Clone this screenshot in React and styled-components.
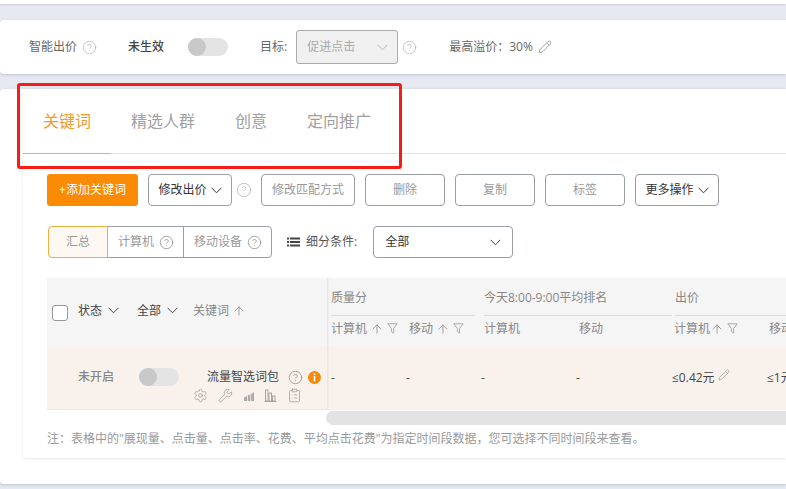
import React from "react";
import styled, { createGlobalStyle } from "styled-components";
import {
  ArrowUp,
  CircleHelp,
  ClipboardList,
  Pencil,
  Settings,
  Wrench,
} from "lucide-react";

const Chevron = ({ color = "currentColor" }) => (
  <svg width="11" height="7" viewBox="0 0 11 7" fill="none" stroke={color} strokeWidth="1" style={{ flex: "none" }}>
    <path d="M0.6 0.8L5.5 5.8L10.4 0.8" />
  </svg>
);

const FunnelIcon = () => (
  <svg width="11" height="11" viewBox="0 0 11 11" fill="none" stroke="#aaa" strokeWidth="1" style={{ flex: "none" }}>
    <path d="M0.8 0.8h9.4L6.6 5.4v4.6L4.4 8.6V5.4z" />
  </svg>
);

const InfoIcon = () => (
  <svg width="13" height="13" viewBox="0 0 13 13">
    <circle cx="6.5" cy="6.5" r="6.5" fill="#f68a06" />
    <rect x="5.7" y="2.4" width="1.6" height="1.7" fill="#fff" />
    <rect x="5.7" y="5" width="1.6" height="5.4" fill="#fff" />
  </svg>
);

const ListIcon = () => (
  <svg width="13" height="10" viewBox="0 0 13 10" fill="#444">
    <rect x="0" y="0.5" width="2" height="2" />
    <rect x="3" y="0.5" width="10" height="2" />
    <rect x="0" y="4" width="2" height="2" />
    <rect x="3" y="4" width="10" height="2" />
    <rect x="0" y="7.5" width="2" height="2" />
    <rect x="3" y="7.5" width="10" height="2" />
  </svg>
);

const AreaChartIcon = () => (
  <svg width="12" height="12" viewBox="0 0 12 12" fill="#aaa">
    <path d="M1 11V7.5l3-1.5v5zM4.8 11V5.6l2.6-1.3V11zM8.2 11V3.9L11 2v9z" />
  </svg>
);

const BarsIcon = () => (
  <svg width="13" height="13" viewBox="0 0 13 13" fill="none" stroke="#a5a5a5" strokeWidth="1">
    <path d="M0.5 12.5h12" />
    <rect x="1.5" y="1" width="2.5" height="11" />
    <rect x="5" y="4" width="2.5" height="8" />
    <rect x="8.5" y="7" width="2.5" height="5" />
  </svg>
);

const App = () => {
  return (
    <Page>
      <GlobalStyle />
      <TopStrip />
      <BidCard>
        <BidLabel>智能出价</BidLabel>
        <Help $size={13} $left={6} />
        <StatusText>未生效</StatusText>
        <Toggle $left={24} />
        <BidLabel $left={32}>目标:</BidLabel>
        <GoalSelect>
          促进点击
          <Chevron color="#bbb" />
        </GoalSelect>
        <Help $size={13} $left={5} />
        <BidLabel $left={33}>{"最高溢价\uFF1A30%"}</BidLabel>
        <Pencil size={14} color="#888" strokeWidth={1.3} style={{ marginLeft: 5 }} />
      </BidCard>

      <MainPanel>
        <InnerCard>
          <Tabs>
            <Tab $active>关键词</Tab>
            <Tab>精选人群</Tab>
            <Tab>创意</Tab>
            <Tab>定向推广</Tab>
          </Tabs>

          <Toolbar>
            <PrimaryButton>+添加关键词</PrimaryButton>
            <Button $width={84} $dark>
              修改出价
              <Chevron />
            </Button>
            <Help $size={14} $left={-5} />
            <Button $width={94}>修改匹配方式</Button>
            <Button $width={80}>删除</Button>
            <Button $width={80}>复制</Button>
            <Button $width={80}>标签</Button>
            <Button $width={84} $dark>
              更多操作
              <Chevron />
            </Button>
          </Toolbar>

          <FilterRow>
            <Segments>
              <Segment $width={60} $active>汇总</Segment>
              <Segment $width={77}>
                计算机
                <Help $size={13} $left={6} $color="#888" />
              </Segment>
              <Segment $width={89}>
                移动设备
                <Help $size={13} $left={6} $color="#888" />
              </Segment>
            </Segments>
            <ConditionLabel>
              <ListIcon />
              细分条件:
            </ConditionLabel>
            <ConditionSelect>
              全部
              <Chevron color="#444" />
            </ConditionSelect>
          </FilterRow>

          <Table>
            <FixedColumn>
              <FixedHead>
                <Checkbox />
                <HeadItem $left={10} $gap={6} $dark>
                  状态
                  <Chevron />
                </HeadItem>
                <HeadItem $left={18} $gap={6} $dark>
                  全部
                  <Chevron />
                </HeadItem>
                <HeadItem $left={15} $gap={3}>
                  关键词
                  <ArrowUp size={14} strokeWidth={1.3} />
                </HeadItem>
              </FixedHead>
              <FixedRow>
                <OffText>未开启</OffText>
                <Toggle $left={25} />
                <NameCell>
                  <NameLine>
                    流量智选词包
                    <Help $size={13} $left={10} $color="#888" />
                    <InfoSlot>
                      <InfoIcon />
                    </InfoSlot>
                  </NameLine>
                  <ActionIcons>
                    <Settings size={15} color="#999" strokeWidth={1.2} />
                    <Wrench size={15} color="#999" strokeWidth={1.2} />
                    <AreaChartIcon />
                    <BarsIcon />
                    <ClipboardList size={15} color="#999" strokeWidth={1.2} />
                  </ActionIcons>
                </NameCell>
              </FixedRow>
            </FixedColumn>

            <DataGrid>
              <GroupHead $span={2} $gap={6}>质量分</GroupHead>
              <GroupHead $span={2} $gap={0} $left={3}>今天8:00-9:00平均排名</GroupHead>
              <GroupHead $span={2} $gap={-30} $left={3}>出价</GroupHead>

              <SubHead>
                计算机
                <ArrowUp size={14} strokeWidth={1.3} />
                <FunnelIcon />
              </SubHead>
              <SubHead $left={3}>
                移动
                <ArrowUp size={14} strokeWidth={1.3} />
                <FunnelIcon />
              </SubHead>
              <SubHead $left={3}>计算机</SubHead>
              <SubHead $left={3}>移动</SubHead>
              <SubHead $left={2}>
                计算机
                <ArrowUp size={14} strokeWidth={1.3} style={{ marginLeft: -3 }} />
                <FunnelIcon />
              </SubHead>
              <SubHead $left={2}>移动</SubHead>

              <Value>-</Value>
              <Value>-</Value>
              <Value>-</Value>
              <Value>-</Value>
              <Value>
                ≤0.42元
                <Pencil size={12} color="#888" strokeWidth={1.2} style={{ marginLeft: 3, marginTop: -5 }} />
              </Value>
              <Value>≤1元</Value>
            </DataGrid>
          </Table>

          <ScrollTrack />
          <Note>
            {'注\uFF1A表格中的"展现量、点击量、点击率、花费、平均点击花费"为指定时间段数据\uFF0C您可选择不同时间段来查看。'}
          </Note>
        </InnerCard>
      </MainPanel>

      <Highlight />
    </Page>
  );
};

export default App;

// Styled Components

const GlobalStyle = createGlobalStyle`
  html, body {
    margin: 0;
    padding: 0;
    overflow: hidden;
    background: #e6e9f1;
  }
  * {
    box-sizing: border-box;
  }
`;

const Page = styled.div`
  position: relative;
  width: 786px;
  height: 489px;
  overflow: hidden;
  background: #e6e9f1;
  color: #666;
  font: 12px/18px "Open Sans", "Noto Sans CJK SC", sans-serif;
`;

const TopStrip = styled.div`
  height: 4px;
  background: #fff;
  box-shadow: 0 1px 2px rgba(120, 130, 160, 0.25);
  margin-bottom: 16px;
`;

const BidCard = styled.div`
  display: flex;
  align-items: center;
  height: 54px;
  padding-left: 29px;
  background: #fff;
  border-radius: 4px 0 0 4px;
  box-shadow: 0 1px 3px rgba(120, 130, 160, 0.35);
`;

const BidLabel = styled.span`
  margin-left: ${(p) => p.$left || 0}px;
  white-space: nowrap;
`;

// lucide's circle only fills 20/24 of its box, so the box is 2px over the drawn size
const Help = styled(CircleHelp).attrs((p) => ({
  size: p.$size + 2,
  color: p.$color || "#b5b5b5",
  strokeWidth: 1.2,
}))`
  flex: none;
  margin-left: ${(p) => (p.$left || 0) - 1}px;
  margin-right: -1px;
`;

const StatusText = styled.span`
  margin-left: 32px;
  color: #444;
  font-weight: 500;
`;

const Toggle = styled.span`
  flex: none;
  display: block;
  width: 40px;
  height: 18px;
  margin-left: ${(p) => p.$left || 0}px;
  border-radius: 9px;
  background: #e4e4e4;

  &::before {
    content: "";
    display: block;
    width: 18px;
    height: 18px;
    border-radius: 50%;
    background: #c8c8c8;
  }
`;

const GoalSelect = styled.div`
  display: flex;
  align-items: center;
  justify-content: space-between;
  width: 102px;
  height: 34px;
  margin-left: 9px;
  padding: 0 9px 0 10px;
  border: 1px solid #aaa;
  border-radius: 3px;
  background: #f0f0f0;
  color: #aaa;
`;

const MainPanel = styled.div`
  height: 395px;
  margin-top: 15px;
  padding: 0 0 26px 23px;
  background: #fff;
  border-radius: 4px 0 0 4px;
  box-shadow: 0 1px 3px rgba(120, 130, 160, 0.35);
`;

const InnerCard = styled.div`
  height: 100%;
  background: #fff;
  box-shadow: 0 1px 3px rgba(0, 0, 0, 0.1);
  border-radius: 0 0 0 3px;
`;

const Tabs = styled.div`
  display: flex;
  height: 65px;
  border-bottom: 1px solid #e4e4e4;
`;

const Tab = styled.div`
  padding: 0 20px;
  margin-bottom: -1px;
  font-size: 16px;
  line-height: 64px;
  color: ${(p) => (p.$active ? "#f39a2b" : "#a0a0a0")};
  border-bottom: 1px solid ${(p) => (p.$active ? "#eeb040" : "transparent")};
`;

const Toolbar = styled.div`
  display: flex;
  align-items: center;
  gap: 10px;
  margin-top: 20px;
  padding-left: 24px;
`;

const PrimaryButton = styled.div`
  width: 91px;
  height: 32px;
  line-height: 32px;
  text-align: center;
  border-radius: 3px;
  background: #fb8a04;
  color: #fff;
`;

const Button = styled.div`
  display: flex;
  align-items: center;
  justify-content: center;
  gap: 4px;
  width: ${(p) => p.$width}px;
  height: 32px;
  border: 1px solid #9a9ea8;
  border-radius: 4px;
  background: #fff;
  color: ${(p) => (p.$dark ? "#333" : "#999")};
`;

const FilterRow = styled.div`
  display: flex;
  align-items: center;
  margin-top: 20px;
  padding-left: 25px;
`;

const Segments = styled.div`
  display: flex;
`;

const Segment = styled.div`
  display: flex;
  align-items: center;
  justify-content: center;
  width: ${(p) => p.$width}px;
  height: 32px;
  margin-left: -1px;
  border: 1px solid ${(p) => (p.$active ? "#eeb040" : "#9a9ea8")};
  background: ${(p) => (p.$active ? "#fdf8f2" : "#fff")};
  color: #999;
  position: relative;
  z-index: ${(p) => (p.$active ? 1 : 0)};

  &:first-child {
    margin-left: 0;
    border-radius: 4px 0 0 4px;
  }
  &:last-child {
    border-radius: 0 4px 4px 0;
  }
`;

const ConditionLabel = styled.div`
  display: flex;
  align-items: center;
  gap: 6px;
  margin-left: 15px;
  color: #555;
`;

const ConditionSelect = styled.div`
  display: flex;
  align-items: center;
  justify-content: space-between;
  width: 140px;
  height: 32px;
  margin-left: 16px;
  padding: 0 11px 0 11px;
  border: 1px solid #9a9ea8;
  border-radius: 4px;
  color: #333;
`;

const Table = styled.div`
  display: flex;
  margin: 20px 0 0 24px;
  height: 132px;
  overflow: hidden;
`;

const FixedColumn = styled.div`
  flex: none;
  width: 280px;
  position: relative;
  z-index: 1;
  box-shadow: 1px 0 2px rgba(0, 0, 0, 0.08);
`;

const FixedHead = styled.div`
  display: flex;
  align-items: center;
  height: 67px;
  padding-left: 5px;
  background: #f5f5f5;
`;

const Checkbox = styled.span`
  flex: none;
  width: 16px;
  height: 16px;
  margin-top: 2px;
  border: 1px solid #999;
  border-radius: 3px;
  background: #fff;
`;

const HeadItem = styled.span`
  display: flex;
  align-items: center;
  gap: ${(p) => p.$gap}px;
  margin-left: ${(p) => p.$left}px;
  margin-bottom: 2px;
  color: ${(p) => (p.$dark ? "#444" : "#888")};
`;

const FixedRow = styled.div`
  display: flex;
  align-items: center;
  height: 65px;
  padding-left: 31px;
  background: #f9f2ec;
  border-bottom: 1px solid #e8e8e8;
`;

const OffText = styled.span`
  color: #888;
  font-weight: 500;
`;

const NameCell = styled.div`
  align-self: flex-start;
  width: 128px;
  margin-left: 14px;
  padding-top: 23px;
`;

const NameLine = styled.div`
  display: flex;
  align-items: center;
  justify-content: flex-end;
  color: #444;
  white-space: nowrap;
`;

const InfoSlot = styled.span`
  display: flex;
  margin-left: 6px;
`;

const ActionIcons = styled.div`
  display: flex;
  align-items: center;
  justify-content: space-between;
  width: 109px;
  height: 13px;
  margin-top: 3px;
`;

const DataGrid = styled.div`
  flex: none;
  display: grid;
  grid-template-columns: 75px 75px 95px 96px 95px 95px;
  grid-template-rows: 38px 29px 65px;
  padding-left: 4px;
  background: linear-gradient(#f5f5f5 67px, #f9f2ec 67px);
`;

const GroupHead = styled.div`
  grid-column: span ${(p) => p.$span};
  margin-right: ${(p) => p.$gap}px;
  margin-left: ${(p) => p.$left || 0}px;
  padding-top: 11px;
  color: #888;
  border-bottom: 1px solid #ddd;
  white-space: nowrap;
`;

const SubHead = styled.div`
  display: flex;
  align-items: center;
  gap: 3px;
  padding: 0 0 4px ${(p) => p.$left || 0}px;
  color: #888;
  white-space: nowrap;
`;

const Value = styled.div`
  display: flex;
  align-items: center;
  color: #444;
  white-space: nowrap;
`;

const ScrollTrack = styled.div`
  height: 14px;
  margin: 1px 0 0 303px;
  border-radius: 7px 0 0 7px;
  background: #e3e3e3;
`;

const Note = styled.div`
  margin: 5px 0 0 24px;
  line-height: 18px;
  color: #999;
  white-space: nowrap;
`;

const Highlight = styled.div`
  position: absolute;
  left: 17px;
  top: 83px;
  width: 385px;
  height: 86px;
  border: 3px solid #f51d14;
  border-radius: 3px;
  pointer-events: none;
`;
